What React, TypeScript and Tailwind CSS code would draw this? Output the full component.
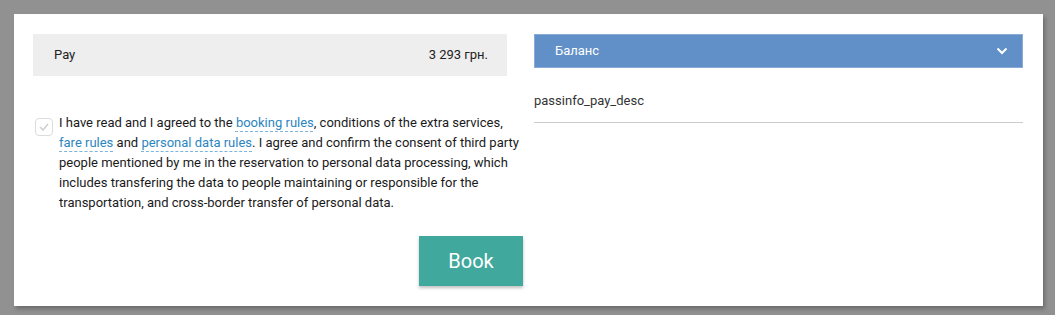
import React from "react";

const linkCls = "text-[#2b86c0] underline decoration-dashed decoration-[#7fb4da] underline-offset-[4px] decoration-1";

export default function App() {
  return (
    <div className="w-[1055px] h-[315px] bg-[#919191] pt-[14px] pl-[14px]" style={{ fontFamily: "Roboto, 'Liberation Sans', sans-serif" }}>
      <div className="w-[1029px] h-[292px] bg-white shadow-[2px_3px_4px_rgba(0,0,0,0.25)] pt-[20px] pl-[19px] pr-[20px] flex gap-[11px]">
        <div className="w-[490px] flex flex-col">
          <div className="w-[474px] h-[42px] bg-[#eeeeee] flex items-center justify-between pl-[21px] pr-[19px] text-[13px] text-[#222]">
            <span>Pay</span>
            <span>3 293 грн.</span>
          </div>
          <div className="mt-[37px] flex items-start gap-[6px]">
            <div className="mt-[5px] ml-[2px] w-[18px] h-[18px] shrink-0 rounded-[4px] border border-[#dcdcdc] flex items-center justify-center">
              <svg width="10" height="8" viewBox="0 0 10 8" fill="none">
                <path d="M1 4l3 3 5-6" stroke="#d0d0d0" strokeWidth="1.6" />
              </svg>
            </div>
            <p className="text-[13px] leading-[20px] text-[#1a1a1a] w-[464px]">
              I have read and I agreed to the{" "}
              <a className={linkCls}>booking rules</a>, conditions of the extra services,{" "}
              <a className={linkCls}>fare rules</a> and{" "}
              <a className={linkCls}>personal data rules</a>. I agree and confirm the consent of third party people mentioned by me in the reservation to personal data processing, which includes transfering the data to people maintaining or responsible for the transportation, and cross-border transfer of personal data.
            </p>
          </div>
          <div className="mt-[23px] flex justify-end">
            <button className="w-[104px] h-[50px] bg-[#40a89d] text-white text-[20px] shadow-[0_2px_3px_rgba(0,0,0,0.25)]">Book</button>
          </div>
        </div>
        <div className="w-[489px] flex flex-col">
          <div className="h-[34px] bg-[#6190c8] border border-[#8aaad6] flex items-center justify-between pl-[20px] pr-[14px] text-white text-[13px]">
            <span>Баланс</span>
            <svg width="12" height="8" viewBox="0 0 12 8" fill="none">
              <path d="M1.5 1.5l4.5 4.5 4.5-4.5" stroke="white" strokeWidth="2" />
            </svg>
          </div>
          <div className="h-[55px] border-b border-[#cccccc] flex items-center text-[13px] text-[#333] pt-[12px]">
            passinfo_pay_desc
          </div>
        </div>
      </div>
    </div>
  );
}
